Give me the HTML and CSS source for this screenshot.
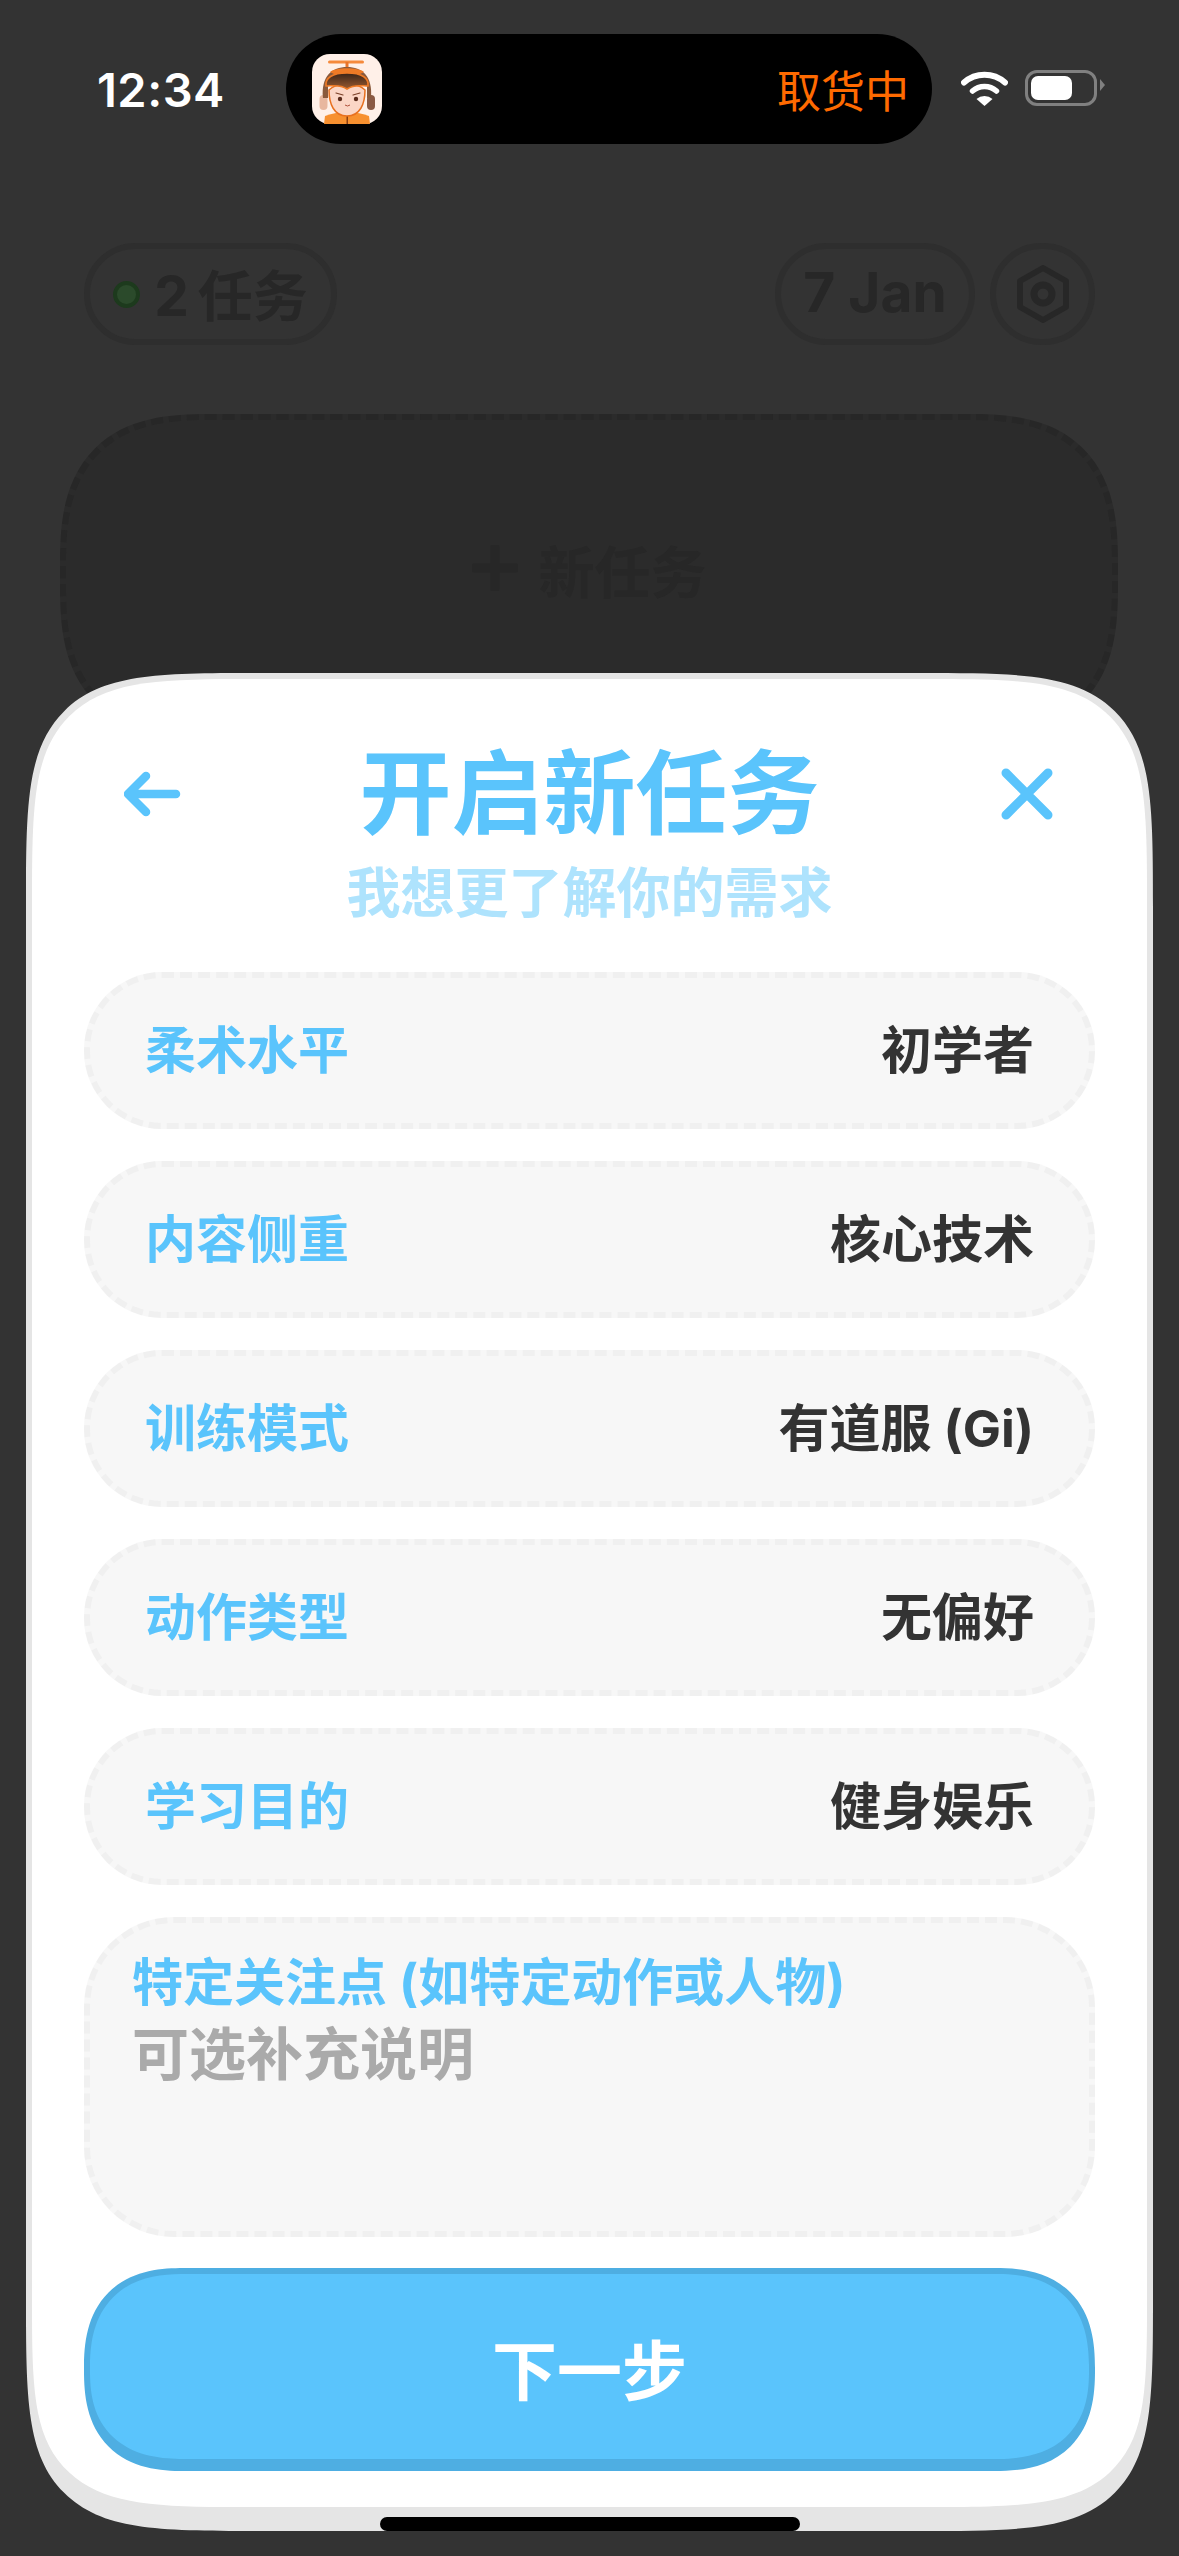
FILE: index.html
```html
<!DOCTYPE html>
<html lang="zh-CN">
<head>
  <meta charset="UTF-8" />
  <title>开启新任务</title>
  <link rel="stylesheet" href="styles.css">
</head>
<body>
  <div class="status-bar">
    <div class="time">12:34</div>
    <div class="island">
      <svg class="avatar" viewBox="0 0 70 70">
        <defs>
          <linearGradient id="goggle" x1="0" y1="0" x2="0" y2="1">
            <stop offset="0" stop-color="#3a2418"/>
            <stop offset="1" stop-color="#9a5a30"/>
          </linearGradient>
        </defs>
        <rect width="70" height="70" rx="18" fill="#fff0e8"/>
        <rect x="16" y="6.5" width="36" height="3" rx="1.5" fill="#f58a3c"/>
        <rect x="33.5" y="8" width="3" height="7" fill="#e9742a"/>
        <path d="M13 62 Q35 54 57 62 L58 70 H12 Z" fill="#f7902f"/>
        <rect x="34.5" y="62" width="1.5" height="8" fill="#8a3d10"/>
        <rect x="7.5" y="41" width="8" height="15" rx="4" fill="#e8b79f"/>
        <rect x="55" y="41" width="8" height="15" rx="4" fill="#8a5a44"/>
        <path d="M11 44 C9 22 20 13 35 13 C50 13 61 22 59 44 L55 44 L55 30 H16 V44 Z" fill="#8b5a3c"/>
        <path d="M18 18 C24 13 46 13 52 18 L48 20 H22 Z" fill="#ee7a26"/>
        <path d="M17 36 C17 50 22 62 35 62 C48 62 53 50 53 36 C46 30 40 30 35 32 C30 30 24 30 17 36 Z" fill="#fbd6c6" stroke="#e8701f" stroke-width="1.5"/>
        <path d="M14 32 C13 24 20 19 35 19 C50 19 57 24 56 32 C50 32 42 30 35 35 C28 30 20 32 14 32 Z" fill="url(#goggle)" stroke="#ee7a26" stroke-width="1.6"/>
        <circle cx="28" cy="45" r="2.2" fill="#5a2c1c"/>
        <circle cx="44" cy="45" r="2.2" fill="#5a2c1c"/>
        <path d="M24 39 L31 41 M48 39 L41 41" stroke="#7a4028" stroke-width="1.2" stroke-linecap="round"/>
        <path d="M33 51 Q35.5 53 38 51" fill="none" stroke="#b0503a" stroke-width="1"/>
      </svg>
      <span class="island-text">取货中</span>
    </div>
    <svg class="wifi" viewBox="0 0 47 35">
      <path d="M3 11.5 A31 31 0 0 1 44 11.5" fill="none" stroke="#fff" stroke-width="6" stroke-linecap="round"/>
      <path d="M11.5 20 A18 18 0 0 1 35.5 20" fill="none" stroke="#fff" stroke-width="5.5" stroke-linecap="round"/>
      <path d="M15.5 28 A12 12 0 0 1 31.5 28 L23.5 35 Z" fill="#fff"/>
    </svg>
    <div class="battery"><div class="battery-fill"></div></div>
  </div>

  <div class="top-row">
    <div class="pill tasks-pill">
      <span class="dot"></span>
      <span class="pill-text">2 任务</span>
    </div>
    <div class="pill date-pill"><span class="pill-text">7 Jan</span></div>
    <div class="pill gear-pill">
      <svg viewBox="0 0 52 58" width="52" height="58">
        <path d="M26 3 L49 16 V42 L26 55 L3 42 V16 Z" fill="none" stroke="#272727" stroke-width="6" stroke-linejoin="round"/>
        <circle cx="26" cy="29" r="9" fill="none" stroke="#272727" stroke-width="7"/>
      </svg>
    </div>
  </div>

  <div class="new-card">
    <svg viewBox="0 0 46 46" width="46" height="46">
      <path d="M23 2 V44 M2 23 H44" stroke="#272727" stroke-width="9" stroke-linecap="round"/>
    </svg>
    <span>新任务</span>
  </div>

  <div class="sheet">
    <div class="sheet-header">
      <svg class="header-icon" viewBox="0 0 60 60">
        <path d="M52 30 H4 M22 12 L4 30 L22 48" fill="none" stroke="#5ac4fc" stroke-width="8.5" stroke-linecap="round" stroke-linejoin="round"/>
      </svg>
      <h1>开启新任务</h1>
      <svg class="header-icon" viewBox="0 0 60 60">
        <path d="M11 9 L53 51 M53 9 L11 51" fill="none" stroke="#5ac4fc" stroke-width="9" stroke-linecap="round"/>
      </svg>
    </div>
    <div class="subtitle">我想更了解你的需求</div>

    <div class="options">
      <div class="option"><span class="option-label">柔术水平</span><span class="option-value">初学者</span></div>
      <div class="option"><span class="option-label">内容侧重</span><span class="option-value">核心技术</span></div>
      <div class="option"><span class="option-label">训练模式</span><span class="option-value">有道服 (Gi)</span></div>
      <div class="option"><span class="option-label">动作类型</span><span class="option-value">无偏好</span></div>
      <div class="option"><span class="option-label">学习目的</span><span class="option-value">健身娱乐</span></div>
      <div class="note">
        <div class="option-label">特定关注点 (如特定动作或人物)</div>
        <div class="note-placeholder">可选补充说明</div>
      </div>
    </div>

    <button class="next-btn">下一步</button>
  </div>

  <div class="home-bar"></div>
</body>
</html>
```

FILE: styles.css
```css
* {
  box-sizing: border-box;
}

html, body {
  margin: 0;
  height: 2556px;
  overflow: hidden;
}

body {
  position: relative;
  background: #333;
  font-family: Inter, "Noto Sans CJK SC", sans-serif;
  font-weight: 700;
}

/* status bar */
.status-bar {
  display: flex;
  align-items: center;
  height: 144px;
  padding: 34px 0 0 97px;
}

.time {
  width: 125px;
  color: #fff;
  font-size: 47px;
  font-weight: 600;
  letter-spacing: 0.5px;
  line-height: 1;
  white-space: nowrap;
}

.island {
  display: flex;
  align-items: center;
  justify-content: space-between;
  width: 646px;
  height: 110px;
  margin-left: 64px;
  padding: 0 23px 0 26px;
  background: #000;
  border-radius: 55px;
}

.avatar {
  width: 70px;
  height: 70px;
  filter: blur(0.5px);
}

.island-text {
  color: #ff6a00;
  font-size: 44px;
  font-weight: 400;
}

.wifi {
  width: 47px;
  height: 35px;
  margin-left: 29px;
  margin-top: -2px;
}

.battery {
  position: relative;
  width: 72px;
  height: 36px;
  margin-left: 17px;
  margin-top: -2px;
  padding: 3px;
  border: 3px solid #808080;
  border-radius: 12px;
}

.battery::after {
  content: "";
  position: absolute;
  right: -11px;
  top: 6px;
  border-left: 5px solid #808080;
  border-top: 6px solid transparent;
  border-bottom: 6px solid transparent;
}

.battery-fill {
  width: 41px;
  height: 24px;
  background: #fff;
  border-radius: 7px;
}

/* dimmed page behind the sheet */
.top-row {
  display: flex;
  align-items: center;
  gap: 15px;
  margin-top: 99px;
  padding: 0 84px;
}

.pill {
  display: flex;
  align-items: center;
  justify-content: center;
  height: 102px;
  border: 6px solid #2e2e2e;
  border-radius: 51px;
  color: #272727;
  font-size: 55px;
  white-space: nowrap;
}

.pill-text {
  margin-top: -5px;
  word-spacing: -4px;
}

.tasks-pill {
  width: 253px;
  gap: 14px;
  margin-right: auto;
}

.dot {
  width: 27px;
  height: 27px;
  background: #2b4a2b;
  border: 4px solid #1d3a1d;
  border-radius: 50%;
}

.date-pill {
  width: 200px;
}

.date-pill .pill-text {
  word-spacing: 0;
}

.gear-pill {
  width: 105px;
}

.new-card {
  display: flex;
  align-items: center;
  justify-content: center;
  gap: 21px;
  height: 322px;
  margin: 69px 61px 0 60px;
  padding-bottom: 14px;
  background: #2b2b2b;
  border: 6px dashed #272727;
  border-radius: 150px;
  corner-shape: superellipse(1.4);
  color: #272727;
  font-size: 56px;
}

/* bottom sheet */
.sheet {
  position: absolute;
  left: 26px;
  top: 673px;
  width: 1127px;
  height: 1858px;
  padding: 65px 52px 0;
  background: #fff;
  border: 6px solid #e5e5e5;
  border-bottom-width: 24px;
  border-radius: 240px;
  corner-shape: squircle;
}

.sheet-header {
  display: flex;
  align-items: center;
  justify-content: space-between;
  height: 100px;
  padding: 0 40px;
}

.header-icon {
  width: 60px;
  height: 60px;
}

h1 {
  margin: 0;
  color: #5ac4fc;
  font-size: 92px;
  line-height: 100px;
}

.subtitle {
  margin-top: 20px;
  color: #aee3fd;
  font-size: 54px;
  line-height: 60px;
  text-align: center;
}

.options {
  display: flex;
  flex-direction: column;
  gap: 32px;
  margin-top: 48px;
}

.option {
  display: flex;
  align-items: center;
  justify-content: space-between;
  height: 157px;
  padding: 0 55px;
  background: #f7f7f7;
  border: 6px dashed #f0f0f0;
  border-radius: 78px;
}

.option-label {
  color: #5ac4fc;
  font-size: 51px;
  line-height: 60px;
}

.option-value {
  color: #333;
  font-size: 51px;
  line-height: 60px;
}

.note {
  height: 320px;
  padding: 30px 42px;
  background: #f7f7f7;
  border: 6px dashed #f0f0f0;
  border-radius: 90px;
}

.note-placeholder {
  margin-top: 10px;
  color: #aaa;
  font-size: 57px;
  line-height: 64px;
}

.next-btn {
  display: block;
  width: 100%;
  height: 203px;
  margin-top: 31px;
  background: #5ac4fc;
  border: 6px solid #4eaee2;
  border-bottom-width: 12px;
  border-radius: 100px;
  corner-shape: superellipse(1.3);
  color: #fff;
  font-family: inherit;
  font-size: 65px;
  font-weight: 700;
}

.home-bar {
  position: absolute;
  left: 380px;
  top: 2517px;
  width: 420px;
  height: 14px;
  background: #000;
  border-radius: 7px;
}
```
